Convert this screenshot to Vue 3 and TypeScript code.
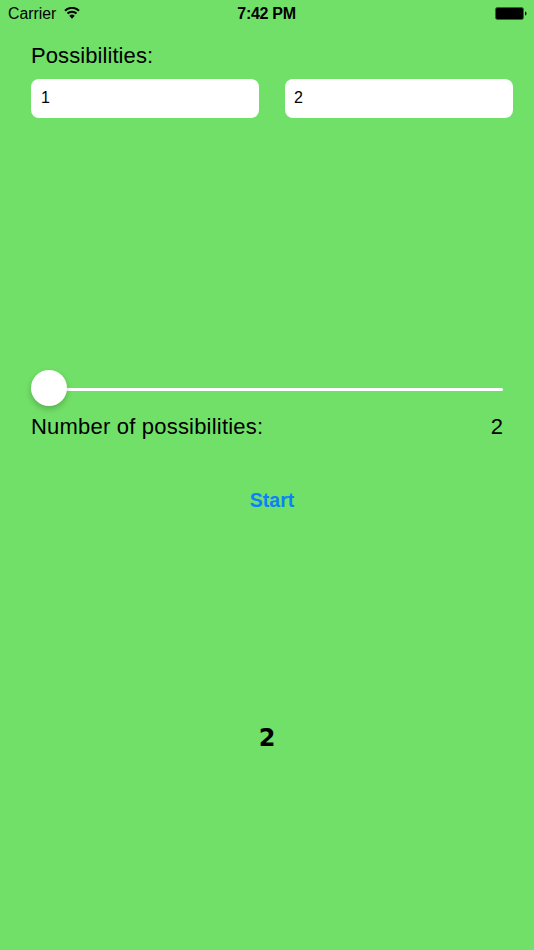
<script setup lang="ts">
const possibilities: string[] = ['1', '2']
</script>

<template>
  <div class="screen">
    <header class="status">
      <div class="status-left">
        <span>Carrier</span>
        <svg class="wifi" width="16" height="12" viewBox="0 0 16 12">
          <path d="M8 11.800 5.300 8.800a3.800 3.800 0 0 1 5.400 0Z" fill="#000" />
          <path d="M3.500 6.500a6.400 6.400 0 0 1 9 0" fill="none" stroke="#000" stroke-width="2" />
          <path d="M1 3.700a10 10 0 0 1 14 0" fill="none" stroke="#000" stroke-width="2" />
        </svg>
      </div>
      <div class="status-time">7:42 PM</div>
      <div class="status-right">
        <svg class="battery" width="32" height="13" viewBox="0 0 32 13">
          <rect x="0.5" y="0.500" width="28" height="12" rx="2" fill="#000" stroke="#2f6a2c" stroke-width="1" />
          <path d="M30 4.500c1 .3 1.500 1 1.500 2s-.5 1.700-1.500 2Z" fill="#000" />
        </svg>
      </div>
    </header>

    <main class="content">
      <div class="title">Possibilities:</div>
      <div class="fields">
        <div v-for="p in possibilities" :key="p" class="field">{{ p }}</div>
      </div>

      <div class="slider">
        <div class="track"></div>
        <div class="thumb"></div>
      </div>

      <div class="count-row">
        <span class="count-label">Number of possibilities:</span>
        <span>2</span>
      </div>

      <div class="start">Start</div>
      <div class="result">2</div>
    </main>
  </div>
</template>

<style>
html, body { margin: 0; padding: 0; }
</style>

<style scoped>
.screen {
  width: 534px;
  height: 950px;
  overflow: hidden;
  background: #71e068;
  color: #000;
  font-family: "Liberation Sans", Arial, sans-serif;
}
.status {
  height: 28px;
  display: grid;
  grid-template-columns: 1fr auto 1fr;
  align-items: center;
  padding: 0 7px 0 8px;
  font-size: 15.800px;
}
.status-left { display: flex; align-items: center; gap: 8px; }
.wifi { margin-top: -3px; }
.status-time { font-weight: 700; font-size: 16px; letter-spacing: -0.3px; margin-left: -2px; }
.status-right { display: flex; justify-content: flex-end; }
.battery { margin-top: -2px; }
.content { padding: 0 21px 0 31px; }
.title {
  font-size: 22px;
  letter-spacing: 0.08px;
  line-height: 26px;
  margin-top: 15px;
}
.fields {
  display: grid;
  grid-template-columns: 228px 228px;
  column-gap: 26px;
  margin-top: 10px;
}
.field {
  height: 39px;
  line-height: 38px;
  padding-left: 10px;
  background: #fff;
  border-radius: 8px;
  font-size: 16px;
}
.field + .field { padding-left: 9px; }
.slider {
  position: relative;
  width: 472px;
  height: 36px;
  margin-top: 252px;
}
.track {
  height: 3px;
  background: #fff;
  transform: translateY(18px);
  border-radius: 2px;
}
.thumb {
  position: absolute;
  left: 0;
  top: 0;
  width: 36px;
  height: 36px;
  border-radius: 50%;
  background: #fff;
  box-shadow: 0 3px 6px rgba(0, 0, 0, 0.22);
}
.count-row {
  width: 472px;
  display: flex;
  justify-content: space-between;
  font-size: 22px;
  line-height: 26px;
  margin-top: 8px;
}
.count-label { letter-spacing: 0.2px; }
.start {
  width: 482px;
  text-align: center;
  font-size: 19.500px;
  font-weight: 700;
  line-height: 24px;
  color: #0b80fb;
  margin-top: 48px;
}
.result {
  width: 472px;
  text-align: center;
  font-family: "DejaVu Sans", sans-serif;
  font-size: 24px;
  font-weight: 700;
  line-height: 30px;
  margin-top: 211px;
}
</style>
